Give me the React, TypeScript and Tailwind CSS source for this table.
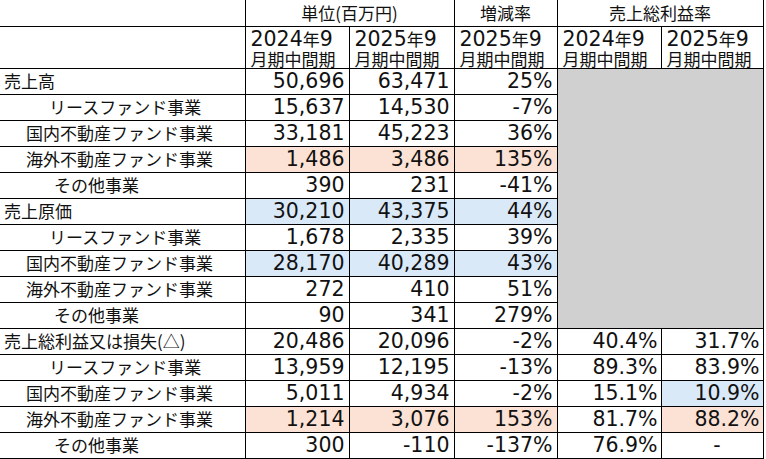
const NUM_FONT = { fontFamily: '"DejaVu Sans", sans-serif' };

type Tone = 'peach' | 'blue' | undefined;

type Row = {
  label: string;
  indent: 'main' | 'lease' | 'fund' | 'other';
  a: string;
  b: string;
  rate: string;
  tones?: [Tone, Tone, Tone];
  margin?: [string, string];
  marginTones?: [Tone, Tone];
};

const ROWS: Row[] = [
  { label: '売上高', indent: 'main', a: '50,696', b: '63,471', rate: '25%' },
  { label: 'リースファンド事業', indent: 'lease', a: '15,637', b: '14,530', rate: '-7%' },
  { label: '国内不動産ファンド事業', indent: 'fund', a: '33,181', b: '45,223', rate: '36%' },
  {
    label: '海外不動産ファンド事業',
    indent: 'fund',
    a: '1,486',
    b: '3,486',
    rate: '135%',
    tones: ['peach', 'peach', 'peach']
  },
  { label: 'その他事業', indent: 'other', a: '390', b: '231', rate: '-41%' },
  {
    label: '売上原価',
    indent: 'main',
    a: '30,210',
    b: '43,375',
    rate: '44%',
    tones: ['blue', 'blue', 'blue']
  },
  { label: 'リースファンド事業', indent: 'lease', a: '1,678', b: '2,335', rate: '39%' },
  {
    label: '国内不動産ファンド事業',
    indent: 'fund',
    a: '28,170',
    b: '40,289',
    rate: '43%',
    tones: ['blue', 'blue', 'blue']
  },
  { label: '海外不動産ファンド事業', indent: 'fund', a: '272', b: '410', rate: '51%' },
  { label: 'その他事業', indent: 'other', a: '90', b: '341', rate: '279%' },
  {
    label: '売上総利益又は損失(△)',
    indent: 'main',
    a: '20,486',
    b: '20,096',
    rate: '-2%',
    margin: ['40.4%', '31.7%']
  },
  {
    label: 'リースファンド事業',
    indent: 'lease',
    a: '13,959',
    b: '12,195',
    rate: '-13%',
    margin: ['89.3%', '83.9%']
  },
  {
    label: '国内不動産ファンド事業',
    indent: 'fund',
    a: '5,011',
    b: '4,934',
    rate: '-2%',
    margin: ['15.1%', '10.9%'],
    marginTones: [undefined, 'blue']
  },
  {
    label: '海外不動産ファンド事業',
    indent: 'fund',
    a: '1,214',
    b: '3,076',
    rate: '153%',
    tones: ['peach', 'peach', 'peach'],
    margin: ['81.7%', '88.2%'],
    marginTones: [undefined, 'peach']
  },
  {
    label: 'その他事業',
    indent: 'other',
    a: '300',
    b: '-110',
    rate: '-137%',
    margin: ['76.9%', '-']
  }
];

const INDENT = {
  main: 'pl-[4px]',
  lease: 'pl-[49px]',
  fund: 'pl-[26px]',
  other: 'pl-[54px]'
};

function toneClass(tone: Tone) {
  if (tone === 'peach') return 'bg-[#fbe2d5]';
  if (tone === 'blue') return 'bg-[#dae9f8]';
  return 'bg-white';
}

function HeaderPeriod({ year }: { year: string }) {
  return (
    <th className="border border-black px-[5px] pt-[2px] text-left align-top font-normal leading-[19px]">
      <div className="whitespace-nowrap">
        <span className="text-[20.5px]" style={NUM_FONT}>
          {year}
        </span>
        <span className="text-[17px]">年</span>
        <span className="text-[20.5px]" style={NUM_FONT}>
          9
        </span>
      </div>
      <div className="whitespace-nowrap text-[17px]">月期中間期</div>
    </th>
  );
}

export default function App() {
  return (
    <div
      className="h-[459px] w-[766px] bg-white text-[#111]"
      style={{ fontFamily: '"Noto Sans CJK JP", sans-serif' }}
    >
      <table className="table-fixed border-collapse">
        <colgroup>
          <col className="w-[245px]" />
          <col className="w-[104px]" />
          <col className="w-[105px]" />
          <col className="w-[103px]" />
          <col className="w-[104px]" />
          <col className="w-[102px]" />
        </colgroup>
        <thead>
          <tr className="h-[26px]">
            <th className="border-r border-b border-black" />
            <th
              colSpan={2}
              className="border-r border-b border-black text-[17px] font-normal leading-[24px]"
            >
              単位(百万円)
            </th>
            <th className="border-r border-b border-black text-[17px] font-normal leading-[24px]">
              増減率
            </th>
            <th
              colSpan={2}
              className="border-r border-b border-black text-[17px] font-normal leading-[24px]"
            >
              売上総利益率
            </th>
          </tr>
          <tr className="h-[42px]">
            <th className="border-t border-r border-b border-black" />
            <HeaderPeriod year="2024" />
            <HeaderPeriod year="2025" />
            <HeaderPeriod year="2025" />
            <HeaderPeriod year="2024" />
            <HeaderPeriod year="2025" />
          </tr>
        </thead>
        <tbody>
          {ROWS.map((row, i) => (
            <tr key={i} className="h-[26px]">
              <td
                className={`whitespace-nowrap border-t border-r border-b border-black p-0 text-[17px] leading-[24px] ${INDENT[row.indent]}`}
              >
                {row.label}
              </td>
              {[row.a, row.b, row.rate].map((v, j) => (
                <td
                  key={j}
                  className={`border border-black p-0 pr-[4px] text-right text-[20.5px] leading-[24px] ${toneClass(row.tones?.[j])}`}
                  style={NUM_FONT}
                >
                  {v}
                </td>
              ))}
              {i === 0 && (
                <td colSpan={2} rowSpan={10} className="border border-black bg-[#d0d0d0]" />
              )}
              {row.margin &&
                row.margin.map((v, j) => (
                  <td
                    key={`m${j}`}
                    className={`border border-black p-0 text-[20.5px] leading-[24px] ${
                      v === '-' ? 'pl-[10px] text-center' : 'pr-[3px] text-right'
                    } ${toneClass(row.marginTones?.[j])}`}
                    style={NUM_FONT}
                  >
                    {v}
                  </td>
                ))}
            </tr>
          ))}
        </tbody>
      </table>
    </div>
  );
}
